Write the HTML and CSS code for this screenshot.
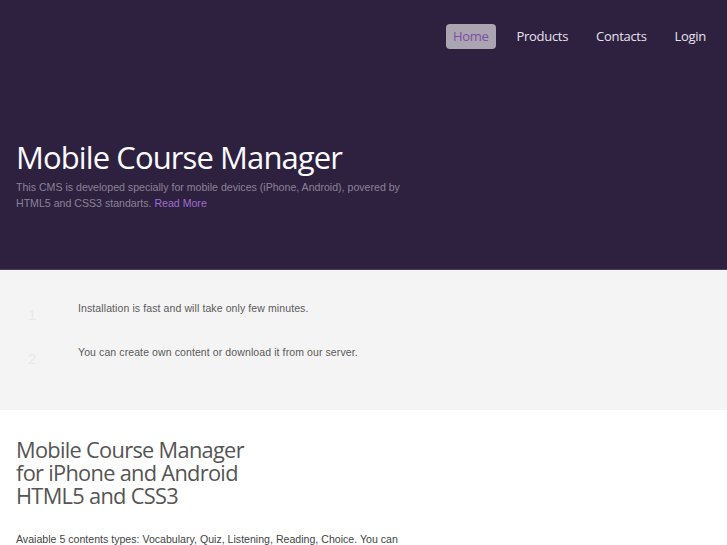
FILE: index.html
```html
<!DOCTYPE html>
<html>
<head>
<meta charset="utf-8">
<link rel="stylesheet" href="styles.css">
</head>
<body>
<header class="hero">
  <nav class="nav">
    <a class="nav-item active">Home</a>
    <a class="nav-item">Products</a>
    <a class="nav-item">Contacts</a>
    <a class="nav-item">Login</a>
  </nav>
  <div class="hero-text">
    <h1 class="hero-title">Mobile Course Manager</h1>
    <p class="hero-desc">This CMS is developed specially for mobile devices (iPhone, Android), povered by HTML5 and CSS3 standarts. <a class="more">Read More</a></p>
  </div>
</header>
<section class="features">
  <div class="feature"><span class="num">1</span><span class="ftext">Installation is fast and will take only few minutes.</span></div>
  <div class="feature"><span class="num">2</span><span class="ftext">You can create own content or download it from our server.</span></div>
</section>
<section class="about">
  <h2 class="about-title">Mobile Course Manager<br>for iPhone and Android<br>HTML5 and CSS3</h2>
  <p class="about-text">Avaiable 5 contents types: Vocabulary, Quiz, Listening, Reading, Choice. You can create own content or download it from our server.</p>
</section>
</body>
</html>
```
FILE: styles.css
```css
html, body { margin: 0; padding: 0; background: #fff; }
body { font-family: "Liberation Sans", Arial, sans-serif; overflow: hidden; }

.hero {
  background: #2e2140;
  height: 269px;
  border-bottom: 1px solid #4a3d5a;
  display: flex;
  flex-direction: column;
}
.nav {
  display: flex;
  justify-content: flex-end;
  padding: 24px 14px 0 0;
}
.nav-item {
  font-family: "Open Sans", sans-serif;
  font-size: 13px;
  letter-spacing: -0.3px;
  color: #e6e2ec;
  height: 25px;
  line-height: 25px;
  padding: 0 7px;
  margin-left: 14px;
  border-radius: 4px;
}
.nav-item.active {
  background: #aaa5b0;
  color: #7c4fa8;
}
.hero-text {
  padding: 88px 16px 0 16px;
  width: 400px;
}
.hero-title {
  font-family: "Open Sans", sans-serif;
  font-weight: 400;
  font-size: 31px;
  letter-spacing: -0.9px;
  color: #fbfbfd;
  margin: 0;
  line-height: 40px;
}
.hero-desc {
  margin: 2px 0 0 0;
  font-size: 10.6px;
  line-height: 16px;
  color: #8a8196;
}
.more { color: #9d6ecb; }

.features {
  background: #f4f4f4;
  height: 140px;
  padding-top: 30px;
  box-sizing: border-box;
}
.feature {
  display: flex;
  align-items: flex-start;
  height: 44px;
}
.num {
  width: 62px;
  padding-left: 28px;
  box-sizing: border-box;
  color: #e9e9e9;
  font-size: 15px;
  padding-top: 6px;
}
.ftext {
  font-size: 10.5px;
  color: #5a5a5a;
  line-height: 16px;
  padding-left: 16px;
  letter-spacing: 0.1px;
}

.about { padding: 28px 16px 0 16px; }
.about-title {
  font-family: "Open Sans", sans-serif;
  font-weight: 400;
  font-size: 21.8px;
  letter-spacing: -0.7px;
  line-height: 23px;
  color: #555;
  margin: 0;
}
.about-text {
  margin: 24px 0 0 0;
  width: 400px;
  font-size: 10.6px;
  line-height: 16px;
  color: #444;
}
```
